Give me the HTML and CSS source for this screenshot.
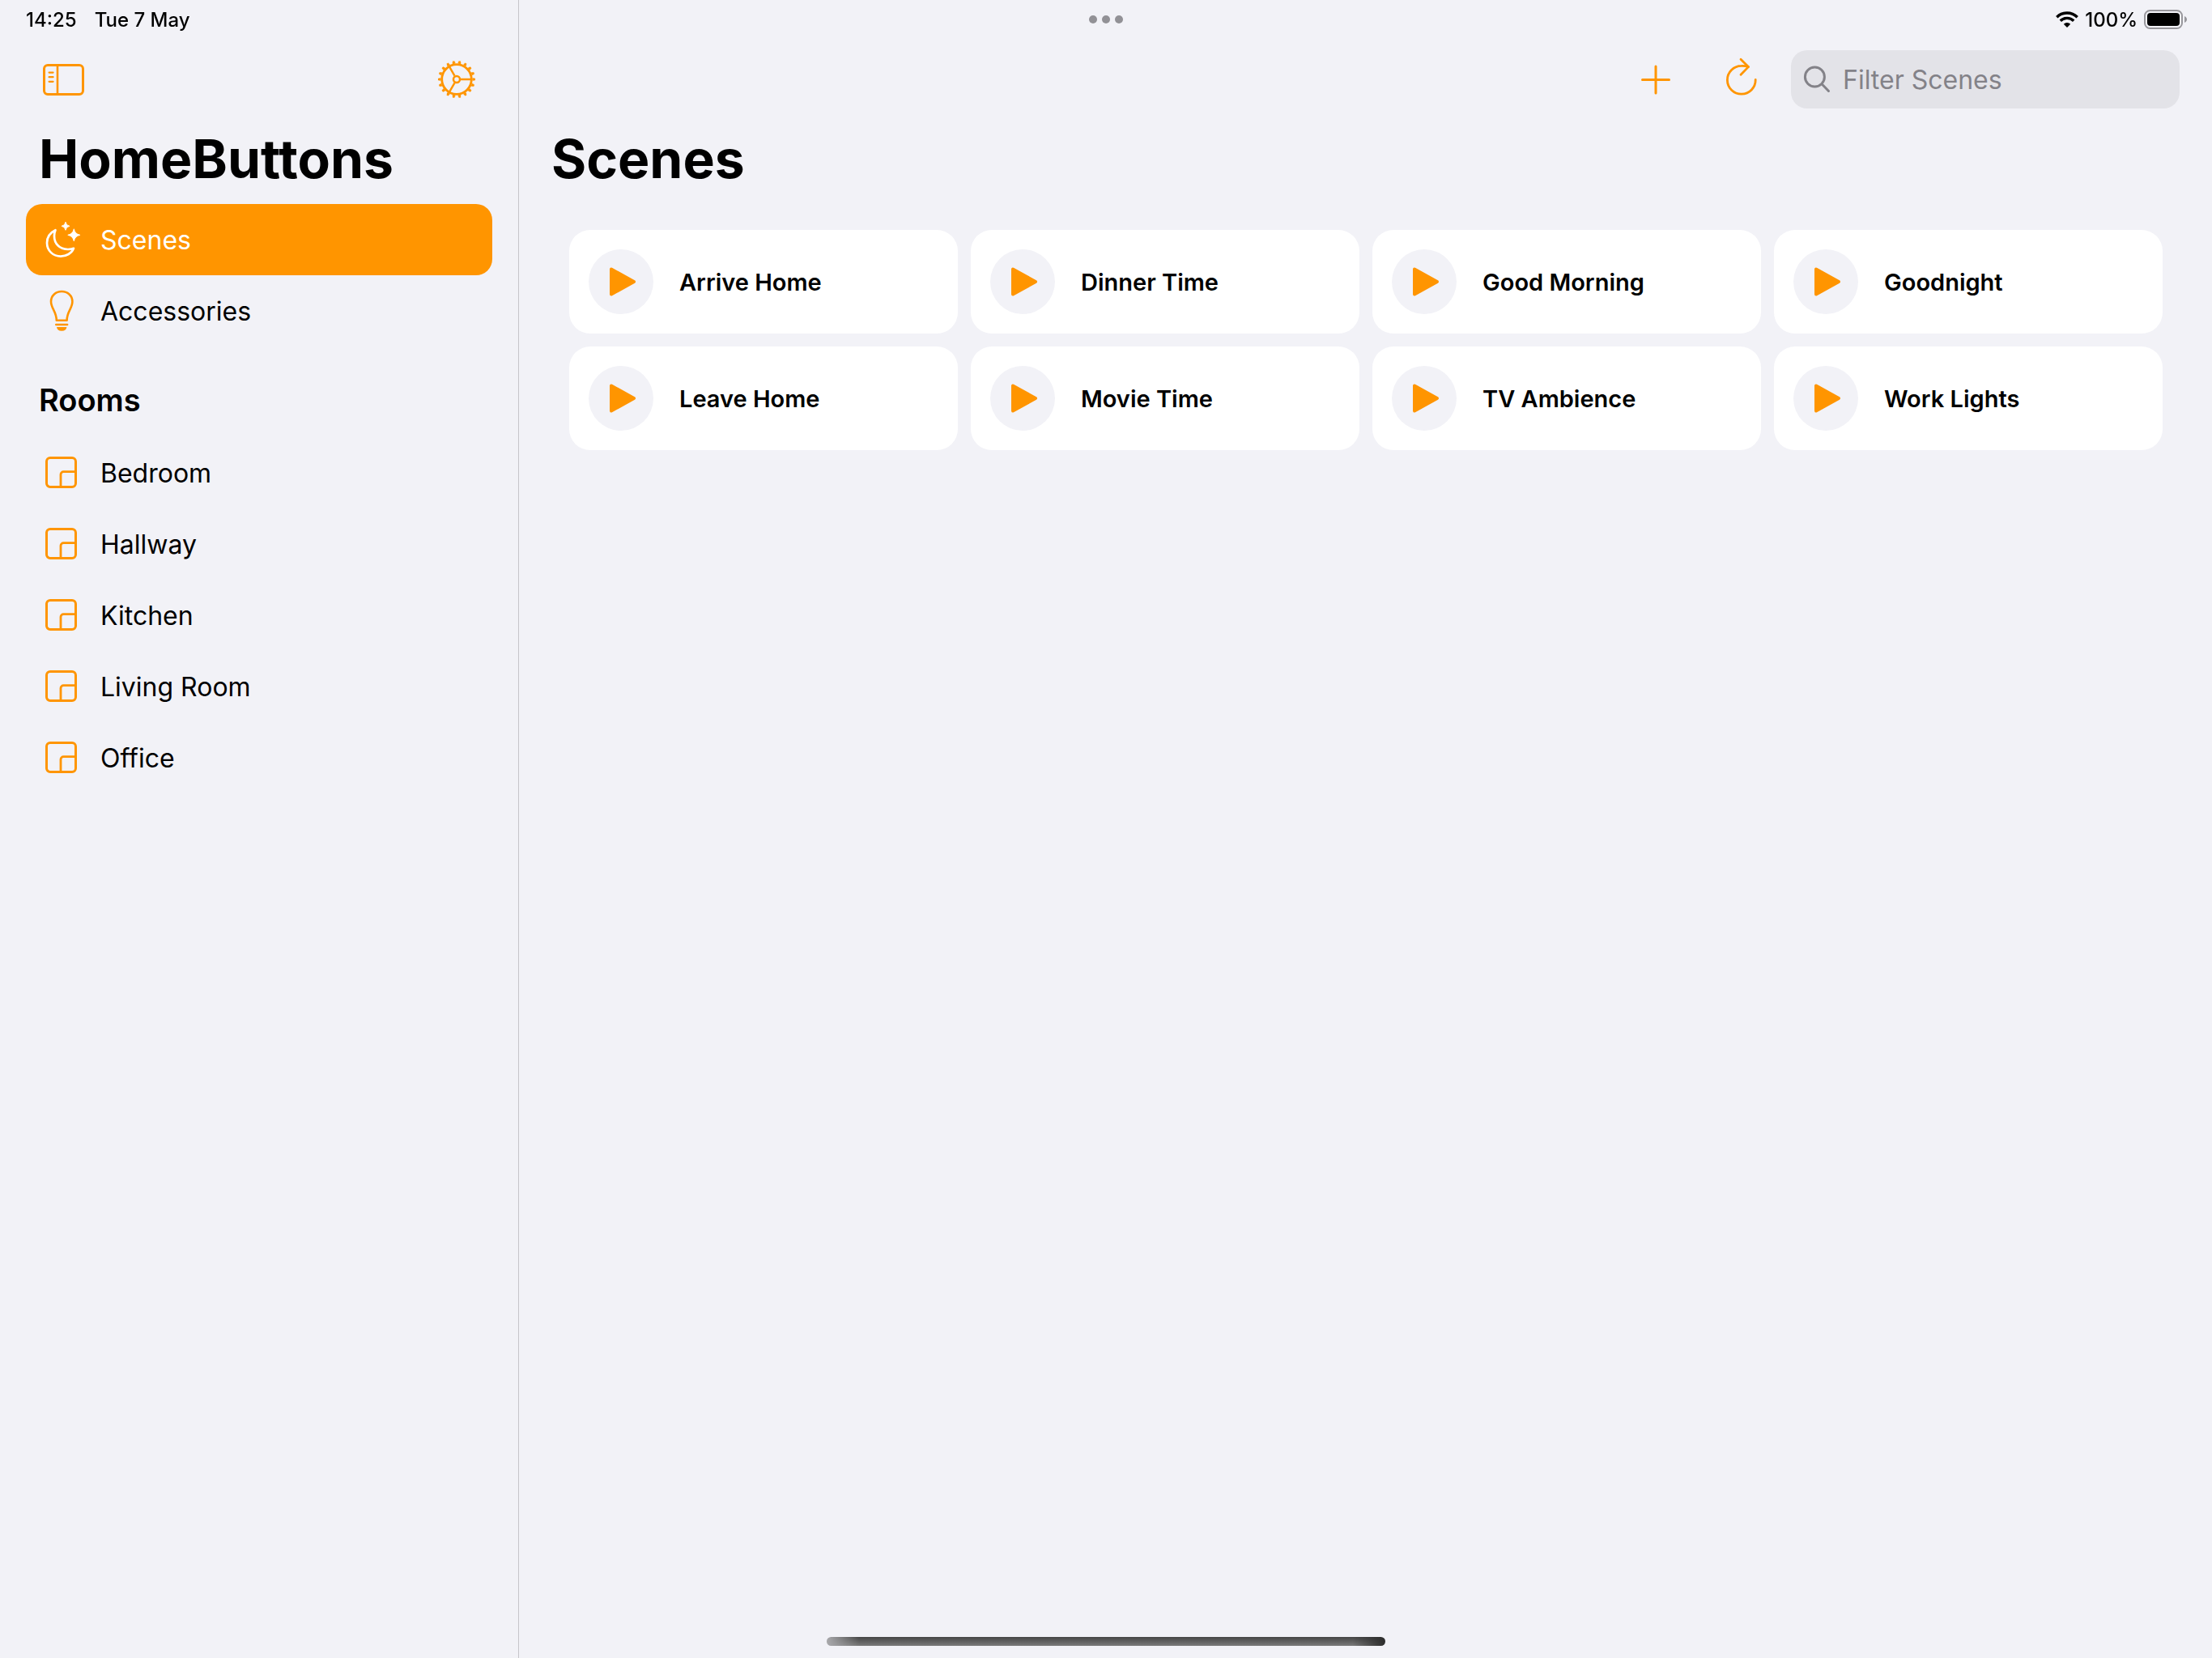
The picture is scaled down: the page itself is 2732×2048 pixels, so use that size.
FILE: index.html
```html
<!DOCTYPE html>
<html lang="en">
<head>
<meta charset="utf-8">
<meta name="viewport" content="width=device-width, initial-scale=1">
<title>HomeButtons</title>
<link rel="stylesheet" href="styles.css">
</head>
<body>
<svg class="symbols" aria-hidden="true">
  <symbol id="room" viewBox="0 0 44 56">
    <rect x="3.5" y="9.5" width="36" height="36" rx="4.5" fill="none" stroke="currentColor" stroke-width="3"/>
    <path d="M39 26.6H24.500a3.500 3.500 0 0 0-3.500 3.500V45" fill="none" stroke="currentColor" stroke-width="2.800"/>
  </symbol>
  <symbol id="play" viewBox="0 0 80 80">
    <path d="M28 24.500V55.500L56 40Z" fill="currentColor" stroke="currentColor" stroke-width="4" stroke-linejoin="round"/>
  </symbol>
</svg>

<div class="status">
  <div class="status-side">
    <time>14:25</time>
    <span>Tue 7 May</span>
  </div>
  <div class="dots"><i></i><i></i><i></i></div>
  <div class="status-side status-right">
    <svg class="wifi" viewBox="0 0 28 20" aria-hidden="true">
      <g fill="none" stroke="currentColor" stroke-width="3.400">
        <path d="M1.300 7.200A18 18 0 0 1 26.700 7.200"/>
        <path d="M5.800 11.800A11.600 11.600 0 0 1 22.200 11.800"/>
      </g>
      <path d="M14 20L9.800 15.800A6 6 0 0 1 18.200 15.800Z" fill="currentColor"/>
    </svg>
    <span>100%</span>
    <svg class="battery" viewBox="0 0 54 24" aria-hidden="true">
      <rect x="1" y="1" width="46" height="22" rx="6.500" fill="none" stroke="#98979c" stroke-width="2"/>
      <rect x="4" y="4" width="40" height="16" rx="4" fill="currentColor"/>
      <path d="M50 8c4 1.500 4 6.500 0 8z" fill="#98979c"/>
    </svg>
  </div>
</div>

<div class="app">
  <aside class="sidebar">
    <div class="toolbar sidebar-toolbar">
      <button class="tool" type="button" aria-label="Hide sidebar">
        <svg viewBox="0 0 52 52" aria-hidden="true">
          <g fill="none" stroke="currentColor">
            <rect x="2.500" y="8.500" width="48" height="36" rx="4.500" stroke-width="3"/>
            <path d="M19 8V45" stroke-width="2.600"/>
            <path d="M8.600 17.600H13.600M8.600 23.200H13.600M8.600 28.800H13.600" stroke-width="2.200" stroke-linecap="round"/>
          </g>
        </svg>
      </button>
      <button class="tool" type="button" aria-label="Settings">
        <svg viewBox="0 0 52 52" aria-hidden="true">
          <g fill="none" stroke="currentColor">
            <circle cx="26" cy="26" r="18.300" stroke-width="2.800"/>
            <circle cx="26" cy="26" r="20.500" stroke-width="2" pathLength="180" stroke-dasharray="5 5" stroke-dashoffset="2.500"/>
            <circle cx="26" cy="26" r="22" stroke-width="2" pathLength="180" stroke-dasharray="3.400 6.600" stroke-dashoffset="1.700"/>
            <circle cx="26" cy="26" r="4" stroke-width="2.500"/>
            <path d="M31 26H44M23.500 21.700L17 10.400M23.500 30.300L17 41.600" stroke-width="2.400"/>
          </g>
        </svg>
      </button>
    </div>
    <h1 class="title">HomeButtons</h1>
    <nav class="nav">
      <a class="row selected" href="#scenes" aria-current="page">
        <svg viewBox="0 0 44 56" aria-hidden="true">
          <path d="M14.500 16.200C7.500 19.500 4 25 4 32C4 41.500 11.500 48.600 21 48.600C28 48.600 34.500 45 37 38.800C34.500 39.800 32 40 30 40C19.500 40 13 33 13 23.500C13 21 13.500 18.500 14.500 16.200Z" fill="none" stroke="currentColor" stroke-width="2.700" stroke-linejoin="round"/>
          <path d="M27 6.300Q27.600 10.700 32 11.300Q27.600 11.900 27 16.300Q26.400 11.900 22 11.300Q26.400 10.700 27 6.300Z" fill="currentColor" stroke="currentColor"/>
          <path d="M37.300 14.800Q38.500 21.100 44.800 22.300Q38.500 23.500 37.300 29.800Q36.100 23.500 29.800 22.300Q36.100 21.100 37.300 14.800Z" fill="currentColor" stroke="currentColor"/>
        </svg>
        Scenes
      </a>
      <a class="row" href="#accessories">
        <svg viewBox="0 0 44 56" aria-hidden="true">
          <path d="M15.800 39.700C15.800 29 9 25 9 16.500C9 9 15 4 22.200 4S35.400 9 35.400 16.500C35.400 25 28.600 29 28.600 39.700Z" fill="none" stroke="currentColor" stroke-width="2.600" stroke-linejoin="round"/>
          <path d="M15.200 45H29.200" stroke="currentColor" stroke-width="2.400" stroke-linecap="round"/>
          <path d="M16 48H28.400C28 51 26 52.700 22.200 52.700S16.400 51 16 48Z" fill="currentColor"/>
        </svg>
        Accessories
      </a>
      <h2 class="section">Rooms</h2>
      <a class="row" href="#bedroom"><svg aria-hidden="true"><use href="#room"/></svg>Bedroom</a>
      <a class="row" href="#hallway"><svg aria-hidden="true"><use href="#room"/></svg>Hallway</a>
      <a class="row" href="#kitchen"><svg aria-hidden="true"><use href="#room"/></svg>Kitchen</a>
      <a class="row" href="#living-room"><svg aria-hidden="true"><use href="#room"/></svg>Living Room</a>
      <a class="row" href="#office"><svg aria-hidden="true"><use href="#room"/></svg>Office</a>
    </nav>
  </aside>

  <main class="main">
    <div class="toolbar main-toolbar">
      <div class="actions">
        <button class="tool" type="button" aria-label="Add scene">
          <svg viewBox="0 0 52 52" aria-hidden="true">
            <path d="M26 10V43M9.500 26.500H42.500" fill="none" stroke="currentColor" stroke-width="3" stroke-linecap="round"/>
          </svg>
        </button>
        <button class="tool" type="button" aria-label="Refresh">
          <svg viewBox="0 0 52 52" aria-hidden="true">
            <g fill="none" stroke="currentColor" stroke-width="2.800" stroke-linecap="round" stroke-linejoin="round">
              <path d="M43.200 26.500A17.400 17.400 0 1 1 25.800 9.400Q30.500 9.200 34.400 10.600"/>
              <path d="M25 1.200L34.400 10.600L25 20.300"/>
            </g>
          </svg>
        </button>
      </div>
      <label class="search">
        <svg viewBox="0 0 32 34" aria-hidden="true">
          <g fill="none" stroke="currentColor" stroke-width="3" stroke-linecap="round">
            <circle cx="13.400" cy="14" r="12"/>
            <path d="M22.300 23L30.500 31.500"/>
          </g>
        </svg>
        <input type="search" placeholder="Filter Scenes" aria-label="Filter Scenes">
      </label>
    </div>
    <h1 class="title">Scenes</h1>
    <div class="scenes">
      <button class="card" type="button"><svg aria-hidden="true"><use href="#play"/></svg>Arrive Home</button>
      <button class="card" type="button"><svg aria-hidden="true"><use href="#play"/></svg>Dinner Time</button>
      <button class="card" type="button"><svg aria-hidden="true"><use href="#play"/></svg>Good Morning</button>
      <button class="card" type="button"><svg aria-hidden="true"><use href="#play"/></svg>Goodnight</button>
      <button class="card" type="button"><svg aria-hidden="true"><use href="#play"/></svg>Leave Home</button>
      <button class="card" type="button"><svg aria-hidden="true"><use href="#play"/></svg>Movie Time</button>
      <button class="card" type="button"><svg aria-hidden="true"><use href="#play"/></svg>TV Ambience</button>
      <button class="card" type="button"><svg aria-hidden="true"><use href="#play"/></svg>Work Lights</button>
    </div>
  </main>
</div>
<div class="home-indicator"></div>
</body>
</html>
```

FILE: styles.css
```css
* {
  box-sizing: border-box;
}

:root {
  --tint: #ff9500;
  --background: #f2f2f7;
  --fill: #e3e3e8;
  --secondary: #838288;
}

body {
  margin: 0;
  background: var(--background);
  color: #000;
  font-family: Inter, "Liberation Sans", sans-serif;
  font-size: 32px;
}

button,
input {
  font: inherit;
  color: inherit;
  border: 0;
  background: none;
  padding: 0;
}

svg {
  flex: none;
  overflow: visible;
}

.symbols {
  position: absolute;
  width: 0;
  height: 0;
}

/* Status bar: floats over both columns */
.status {
  position: fixed;
  inset: 0 0 auto;
  display: grid;
  grid-template-columns: 1fr auto 1fr;
  align-items: center;
  height: 48px;
  padding: 0 30px;
  font-size: 24px;
  font-weight: 500;
}

.status-side {
  display: flex;
  align-items: center;
  gap: 22px;
  padding-left: 2px;
}

.status-right {
  justify-content: flex-end;
  gap: 8px;
}

.dots {
  display: flex;
  gap: 6px;
}

.dots i {
  width: 10px;
  height: 10px;
  border-radius: 50%;
  background: #929196;
}

.wifi {
  width: 28px;
  height: 20px;
}

.battery {
  width: 54px;
  height: 24px;
}

/* Two columns */
.app {
  display: grid;
  grid-template-columns: 641px 1fr;
  min-height: 100vh;
}

.sidebar {
  border-right: 1px solid #c6c5ca;
  padding: 62px 32px 0;
}

.main {
  padding: 62px 40px 0;
}

.toolbar {
  display: flex;
  align-items: center;
  height: 72px;
}

.tool {
  display: flex;
  color: var(--tint);
}

.tool svg {
  width: 52px;
  height: 52px;
}

.sidebar-toolbar {
  justify-content: space-between;
  padding: 0 18px 0 20px;
}

.main-toolbar {
  justify-content: flex-end;
  gap: 35px;
}

.actions {
  display: flex;
  gap: 54px;
}

.search {
  display: flex;
  align-items: center;
  gap: 16px;
  width: 480px;
  height: 72px;
  padding: 0 16px;
  border-radius: 20px;
  background: var(--fill);
  color: var(--secondary);
}

.search svg {
  width: 32px;
  height: 34px;
}

.search input {
  flex: 1;
  min-width: 0;
  outline: 0;
}

.search input::placeholder {
  color: var(--secondary);
  opacity: 1;
}

.title {
  margin: 22px 0 16px;
  font-size: 66px;
  line-height: 80px;
  font-weight: 700;
}

.sidebar .title {
  padding-left: 16px;
}

/* Sidebar rows */
.row {
  display: flex;
  align-items: center;
  gap: 26px;
  height: 88px;
  padding: 0 22px;
  border-radius: 20px;
  color: #000;
  text-decoration: none;
}

.row svg {
  width: 44px;
  height: 56px;
  color: var(--tint);
}

.row.selected,
.row.selected svg {
  color: #fff;
}

.row.selected {
  background: var(--tint);
}

.section {
  margin: 0;
  padding: 42px 16px 22px;
  font-size: 38px;
  line-height: 48px;
  font-weight: 600;
}

/* Scene cards */
.main .title {
  margin-bottom: 48px;
}

.scenes {
  display: grid;
  grid-template-columns: repeat(4, 1fr);
  gap: 16px;
  padding: 0 21px 0 22px;
}

.card {
  display: flex;
  align-items: center;
  gap: 32px;
  padding: 24px;
  border-radius: 26px;
  background: #fff;
  font-size: 29px;
  font-weight: 600;
  text-align: left;
}

.card svg {
  width: 80px;
  height: 80px;
  border-radius: 50%;
  background: var(--background);
  color: var(--tint);
}

.home-indicator {
  position: fixed;
  bottom: 15px;
  left: 50%;
  width: 690px;
  height: 11px;
  margin-left: -345px;
  border-radius: 6px;
  background:
    linear-gradient(90deg, #a9a9ac, transparent 40px, transparent calc(100% - 40px), #2c2c2c),
    linear-gradient(#464646, #7a7a7a);
}
```
